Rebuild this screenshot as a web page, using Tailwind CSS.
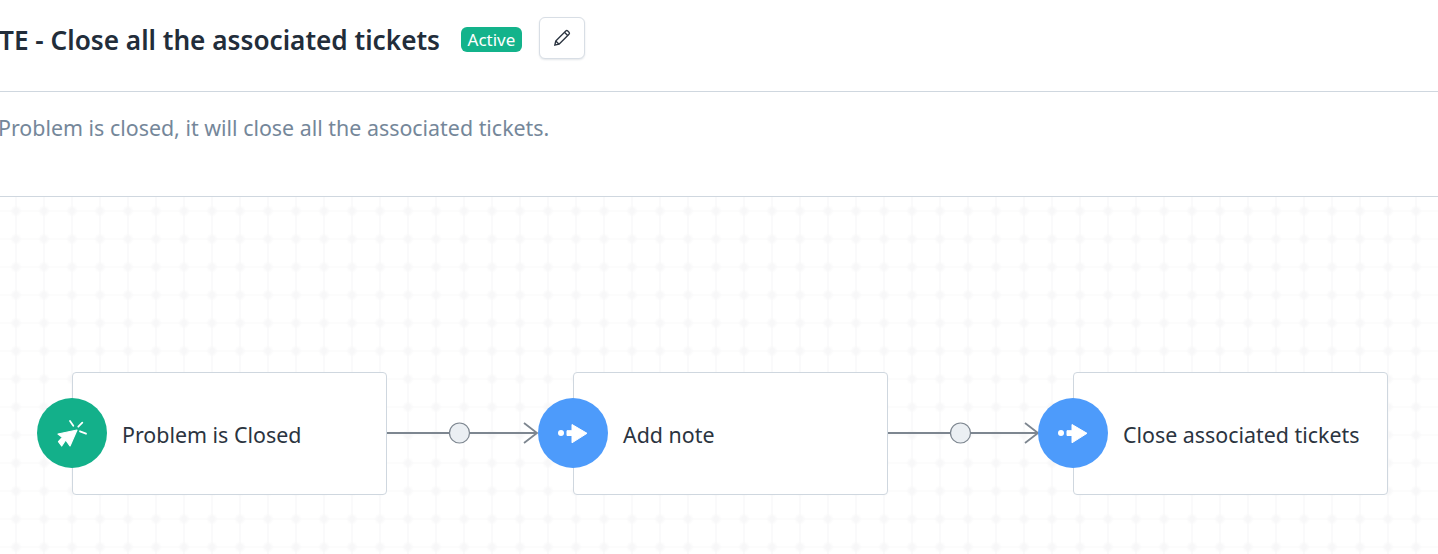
<!DOCTYPE html>
<html lang="en">
<head>
  <meta charset="UTF-8" />
  <title>TE - Close all the associated tickets</title>
  <script src="https://cdn.jsdelivr.net/npm/@tailwindcss/browser@4"></script>
</head>
<body class="h-[554px] overflow-hidden bg-white font-['Noto_Sans',sans-serif] text-[#264966]">

<!-- Header -->
<header class="h-[92px] border-b border-[#cfd7df] flex items-center pb-[12px] -ml-[1px]">
  <h1 class="text-[26.2px] leading-[32px] font-semibold text-[#222d3a] whitespace-nowrap">TE - Close all the associated tickets</h1>
  <span class="ml-[21px] h-[25px] px-[6.5px] rounded-[6px] bg-[#13b38b] text-white text-[17px] leading-[25px] -mt-[1px]">Active</span>
  <button class="ml-[17px] w-[46px] h-[42px] rounded-[6px] border border-[#d8dee5] bg-white shadow-[0_1px_2px_rgba(24,50,71,0.12)] flex items-center justify-center mb-[4px]">
    <svg width="20" height="20" viewBox="0 0 18 18" fill="none" stroke="#2b3440" stroke-width="1.2" stroke-linejoin="round">
      <path d="M2.500 15.500l.9-3.800L12.400 2.700a1.300 1.300 0 0 1 1.800 0l1.100 1.100a1.300 1.300 0 0 1 0 1.800l-9 9z" />
      <path d="M3.400 11.700l2.900 2.900M11.200 3.900l2.900 2.900" />
    </svg>
  </button>
</header>

<!-- Description -->
<div class="h-[105px] border-b border-[#cfd7df] pt-[20px] -ml-[2px]">
  <p class="text-[21.4px] leading-[32px] text-[#75879a] whitespace-nowrap">Problem is closed, it will close all the associated tickets.</p>
</div>

<!-- Canvas -->
<main class="relative h-[357px] bg-[radial-gradient(circle,#f7f7f8_0,#f7f7f8_2px,transparent_6px),linear-gradient(90deg,transparent_13px,#fafafb_13px,#fafafb_15px,transparent_15px),linear-gradient(0deg,transparent_13px,#fcfcfc_13px,#fcfcfc_15px,transparent_15px)] bg-[size:28px_28px] bg-[position:2px_0]">

  <!-- Trigger node -->
  <div class="absolute left-[72px] top-[175px] w-[315px] h-[123px] bg-white border border-[#cfd7df] rounded-[4px] flex items-center pl-[49px] pt-[4px] text-[21.4px] text-[#2b3440]">Problem is Closed</div>
  <div class="absolute left-[37px] top-[201px] w-[70px] h-[70px] rounded-full bg-[#13b08a] flex items-center justify-center">
    <svg width="34" height="34" viewBox="0 0 34 34" fill="#fff">
      <path d="M3 18L22 14 15 30 10.700 24 6.700 30 3.500 25.700 7.300 21.300z" stroke="#fff" stroke-width="1.200" stroke-linejoin="round" />
      <path d="M15 5l3.300 4.700M27.300 6.700l-4 4M31 17.700l-6-2.400" fill="none" stroke="#fff" stroke-width="1.800" stroke-linecap="round" />
    </svg>
  </div>

  <!-- Connector 1 -->
  <svg class="absolute left-[387px] top-[224px]" width="152" height="24" viewBox="0 0 152 24" fill="none">
    <path d="M0 12H150M137 2L150 12 137 22" stroke="#7d8690" stroke-width="1.800" />
    <circle cx="72.500" cy="12" r="10" fill="#ebeff3" stroke="#7d8690" stroke-width="1.200" />
  </svg>

  <!-- Add note node -->
  <div class="absolute left-[573px] top-[175px] w-[315px] h-[123px] bg-white border border-[#cfd7df] rounded-[4px] flex items-center pl-[49px] pt-[4px] text-[21.4px] text-[#2b3440]">Add note</div>
  <div class="absolute left-[538px] top-[201px] w-[70px] h-[70px] rounded-full bg-[#4d9bfb] flex items-center justify-center">
    <svg width="30" height="22" viewBox="0 0 30 22" fill="#fff">
      <circle cx="3" cy="11" r="3" />
      <path d="M9 8.700h5V2.500L29 11.300 14 20.800v-7.300h-5z" stroke="#fff" stroke-width="1" stroke-linejoin="round" />
    </svg>
  </div>

  <!-- Connector 2 -->
  <svg class="absolute left-[888px] top-[224px]" width="152" height="24" viewBox="0 0 152 24" fill="none">
    <path d="M0 12H150M137 2L150 12 137 22" stroke="#7d8690" stroke-width="1.800" />
    <circle cx="72.500" cy="12" r="10" fill="#ebeff3" stroke="#7d8690" stroke-width="1.200" />
  </svg>

  <!-- Close tickets node -->
  <div class="absolute left-[1073px] top-[175px] w-[315px] h-[123px] bg-white border border-[#cfd7df] rounded-[4px] flex items-center pl-[49px] pt-[4px] text-[21.4px] text-[#2b3440]">Close associated tickets</div>
  <div class="absolute left-[1038px] top-[201px] w-[70px] h-[70px] rounded-full bg-[#4d9bfb] flex items-center justify-center">
    <svg width="30" height="22" viewBox="0 0 30 22" fill="#fff">
      <circle cx="3" cy="11" r="3" />
      <path d="M9 8.700h5V2.500L29 11.300 14 20.800v-7.300h-5z" stroke="#fff" stroke-width="1" stroke-linejoin="round" />
    </svg>
  </div>
</main>

</body>
</html>
